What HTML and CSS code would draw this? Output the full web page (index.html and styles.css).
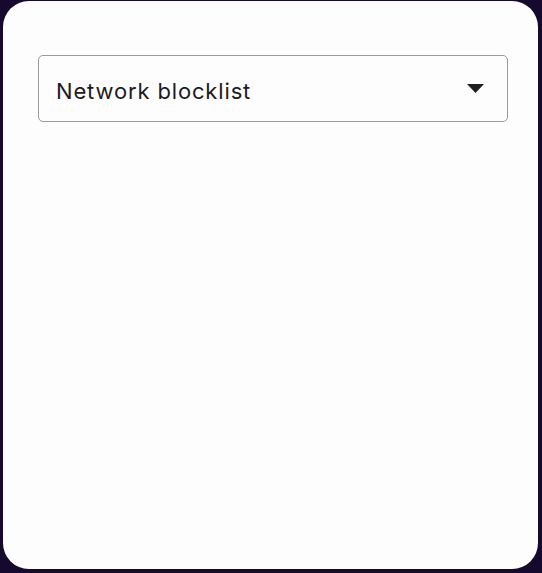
FILE: index.html
```html
<!DOCTYPE html>
<html lang="en">
<head>
<meta charset="utf-8">
<link rel="stylesheet" href="styles.css">
</head>
<body>
<div class="card">
  <div class="select">
    <span class="select-value">Network blocklist</span>
    <svg class="select-arrow" width="17" height="9" viewBox="0 0 17 9"><path d="M0 0 L17 0 L8.5 9 Z" fill="#1f1f1f"/></svg>
  </div>
</div>
</body>
</html>
```
FILE: styles.css
```css
html, body {
  margin: 0;
  padding: 0;
  width: 542px;
  height: 573px;
  background: #150a2e;
  overflow: hidden;
}
body {
  padding: 1px 4px 4px 3px;
  box-sizing: border-box;
  display: flex;
  font-family: Inter, "Noto Sans", sans-serif;
}
.card {
  flex: 1;
  background: #fdfdfd;
  border-radius: 26px;
  padding: 54px 30px 0 35px;
}
.select {
  height: 67px;
  box-sizing: border-box;
  border: 1px solid #9a9a9a;
  border-radius: 5px;
  display: flex;
  align-items: center;
  justify-content: space-between;
  padding: 0 23px 0 17px;
}
.select-value {
  font-size: 22px;
  color: #1c1b1f;
  letter-spacing: 0.85px;
  padding-top: 4px;
}
.select-arrow {
  display: block;
  margin-top: -1px;
}
```
